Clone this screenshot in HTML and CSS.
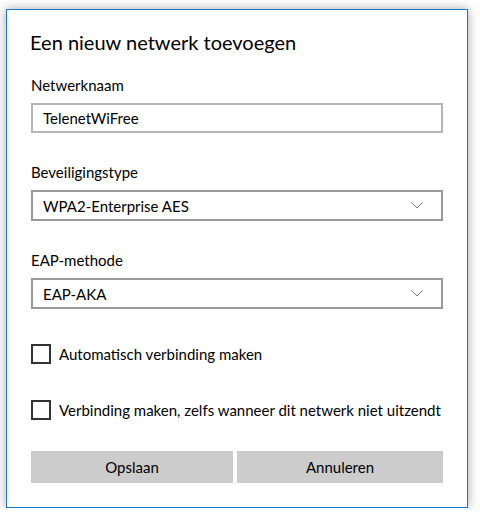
FILE: index.html
```html
<!DOCTYPE html>
<html lang="nl">
<head>
<meta charset="utf-8">
<link rel="stylesheet" href="styles.css">
</head>
<body>
<div class="dialog">
  <h1 class="title">Een nieuw netwerk toevoegen</h1>
  <div class="field field-first">
    <div class="label">Netwerknaam</div>
    <div class="input">TelenetWiFree</div>
  </div>
  <div class="field">
    <div class="label">Beveiligingstype</div>
    <div class="select"><span>WPA2-Enterprise AES</span>
      <svg class="chev" width="12" height="7" viewBox="0 0 12 7"><path d="M0.5 0.5 L6 6 L11.5 0.5" fill="none" stroke="#777" stroke-width="1"/></svg>
    </div>
  </div>
  <div class="field">
    <div class="label">EAP-methode</div>
    <div class="select"><span>EAP-AKA</span>
      <svg class="chev" width="12" height="7" viewBox="0 0 12 7"><path d="M0.5 0.5 L6 6 L11.5 0.5" fill="none" stroke="#777" stroke-width="1"/></svg>
    </div>
  </div>
  <div class="check check-first"><span class="box"></span><span>Automatisch verbinding maken</span></div>
  <div class="check"><span class="box"></span><span>Verbinding maken, zelfs wanneer dit netwerk niet uitzendt</span></div>
  <div class="buttons">
    <div class="btn btn-save">Opslaan</div>
    <div class="btn btn-cancel">Annuleren</div>
  </div>
</div>
</body>
</html>
```
FILE: styles.css
```css
html, body {
  margin: 0;
  padding: 0;
  background: #ffffff;
}
body {
  font-family: "Lato", "Noto Sans", sans-serif;
  color: #000;
  font-size: 15px;
}
.dialog {
  margin: 9px 0 0 6px;
  border: 1px solid #1979ca;
  background: #fff;
  box-shadow: 0 0 10px rgba(0,0,0,0.35);
  padding: 0 24px;
  box-sizing: content-box;
  width: 412px;
  height: 497px;
  display: flex;
  flex-direction: column;
}
.title {
  font-weight: normal;
  font-size: 20px;
  line-height: 28px;
  margin: 18px 0 0 -1px;
}
.field { margin-top: 29px; }
.field-first { margin-top: 19px; }
.label {
  line-height: 20px;
  margin-bottom: 8px;
}
.input, .select {
  height: 30px;
  box-sizing: border-box;
  border: 2px solid #b5b5b5;
  padding: 0 10px;
  display: flex;
  align-items: center;
}
.select {
  border-color: #999;
  justify-content: space-between;
  height: 31px;
}
.chev { margin-right: 8px; }
.check {
  display: flex;
  align-items: center;
  gap: 8px;
  height: 20px;
  margin-top: 36px;
  white-space: nowrap;
}
.check-first { margin-top: 35px; }
.box {
  width: 20px;
  height: 20px;
  box-sizing: border-box;
  border: 2px solid #333;
  flex: none;
}
.buttons {
  display: flex;
  gap: 4px;
  margin-top: 31px;
}
.btn {
  height: 32px;
  background: #ccc;
  display: flex;
  align-items: center;
  justify-content: center;
}
.btn-save { flex: 202 1 0; }
.btn-cancel { flex: 206 1 0; }
```
